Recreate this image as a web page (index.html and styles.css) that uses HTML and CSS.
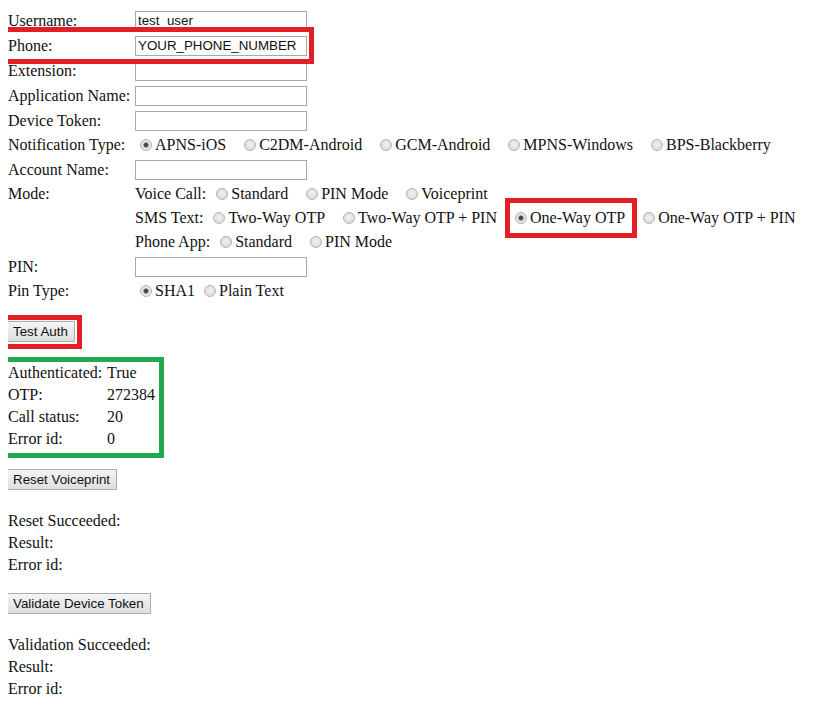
FILE: index.html
```html
<!DOCTYPE html>
<html lang="en">
<head>
    <meta charset="UTF-8">
    <title>Auth Test</title>
    <link rel="stylesheet" href="styles.css">
</head>
<body>
    <form class="auth-form">
        <div class="fields">
            <label for="username">Username:</label>
            <div class="cell"><input type="text" id="username" value="test_user"></div>

            <label for="phone">Phone:</label>
            <div class="cell"><input type="text" id="phone" value="YOUR_PHONE_NUMBER"></div>

            <label for="extension">Extension:</label>
            <div class="cell"><input type="text" id="extension"></div>

            <label for="appName">Application Name:</label>
            <div class="cell"><input type="text" id="appName"></div>

            <label for="deviceToken">Device Token:</label>
            <div class="cell"><input type="text" id="deviceToken"></div>

            <span class="radio-row">Notification Type:</span>
            <div class="choices radio-row">
                <label class="choice"><input type="radio" name="notify" checked>APNS-iOS</label>
                <label class="choice"><input type="radio" name="notify">C2DM-Android</label>
                <label class="choice"><input type="radio" name="notify">GCM-Android</label>
                <label class="choice"><input type="radio" name="notify">MPNS-Windows</label>
                <label class="choice"><input type="radio" name="notify">BPS-Blackberry</label>
            </div>

            <label for="accountName">Account Name:</label>
            <div class="cell"><input type="text" id="accountName"></div>

            <span class="mode-label">Mode:</span>
            <div class="modes">
                <div class="choices radio-row">
                    <span class="sub">Voice Call:</span>
                    <label class="choice"><input type="radio" name="mode">Standard</label>
                    <label class="choice"><input type="radio" name="mode">PIN Mode</label>
                    <label class="choice"><input type="radio" name="mode">Voiceprint</label>
                </div>
                <div class="choices radio-row">
                    <span class="sub">SMS Text:</span>
                    <label class="choice"><input type="radio" name="mode">Two-Way OTP</label>
                    <label class="choice"><input type="radio" name="mode">Two-Way OTP + PIN</label>
                    <label class="choice"><input type="radio" name="mode" checked>One-Way OTP</label>
                    <label class="choice"><input type="radio" name="mode">One-Way OTP + PIN</label>
                </div>
                <div class="choices radio-row">
                    <span class="sub">Phone App:</span>
                    <label class="choice"><input type="radio" name="mode">Standard</label>
                    <label class="choice"><input type="radio" name="mode">PIN Mode</label>
                </div>
            </div>

            <label for="pin">PIN:</label>
            <div class="cell"><input type="text" id="pin"></div>

            <span class="radio-row">Pin Type:</span>
            <div class="choices tight radio-row">
                <label class="choice"><input type="radio" name="pinType" checked>SHA1</label>
                <label class="choice"><input type="radio" name="pinType">Plain Text</label>
            </div>
        </div>

        <div class="section first">
            <button type="button">Test Auth</button>
            <div class="results">
                <span>Authenticated:</span><span>True</span>
                <span>OTP:</span><span>272384</span>
                <span>Call status:</span><span>20</span>
                <span>Error id:</span><span>0</span>
            </div>
        </div>

        <div class="section">
            <button type="button">Reset Voiceprint</button>
            <div class="results">
                <span>Reset Succeeded:</span><span></span>
                <span>Result:</span><span></span>
                <span>Error id:</span><span></span>
            </div>
        </div>

        <div class="section last">
            <button type="button">Validate Device Token</button>
            <div class="results">
                <span>Validation Succeeded:</span><span></span>
                <span>Result:</span><span></span>
                <span>Error id:</span><span></span>
            </div>
        </div>
    </form>

    <!-- marker boxes drawn over the form -->
    <div class="mark red phone-mark"></div>
    <div class="mark red otp-mark"></div>
    <div class="mark red auth-mark"></div>
    <div class="mark green result-mark"></div>
</body>
</html>
```

FILE: styles.css
```css
body {
    font-family: "Liberation Serif", "Times New Roman", serif;
    font-size: 16px;
    color: #111;
    margin: 8px;
    background: #fff;
    position: relative;
}
.fields {
    display: grid;
    grid-template-columns: 127px 1fr;
    grid-template-rows: 25px 25px 25px 25px 25px 24px 25px 24px 24px 24px 25px 24px;
    align-items: center;
}
.fields > label,
.fields > span {
    white-space: nowrap;
}
.radio-row {
    height: 24px;
}
.fields > span.radio-row {
    line-height: 24px;
}
.cell {
    display: flex;
    align-items: center;
}
input[type="text"] {
    width: 172px;
    height: 20px;
    box-sizing: border-box;
    border: 1px solid #a9a9a9;
    padding: 1px 2px;
    margin: 0;
    font-family: "Liberation Sans", Arial, sans-serif;
    font-size: 13.33px;
    color: #111;
}
.choices {
    display: flex;
    align-items: center;
    gap: 13px;
    white-space: nowrap;
}
.choices.tight {
    gap: 4px;
}
.choice {
    display: flex;
    align-items: center;
}
.sub {
    margin-right: -8px;
}
input[type="radio"] {
    appearance: none;
    -webkit-appearance: none;
    width: 12px;
    height: 12px;
    margin: 0 3px 0 5px;
    border: 1px solid #b4b4b4;
    border-radius: 50%;
    background: radial-gradient(circle at 50% 45%, #f2f2f2 0, #dcdcdc 70%, #cfcfcf 100%);
    box-sizing: border-box;
}
input[type="radio"]:checked {
    background: radial-gradient(circle, #3c3c3c 0, #555 2px, #e2e2e2 3px, #e6e6e6 100%);
}
.mode-label {
    grid-row: span 3;
    align-self: start;
    line-height: 24px;
}
.modes {
    grid-row: span 3;
    align-self: start;
}
.section {
    margin-top: 19px;
}
.section.first {
    margin-top: 18px;
}
.section.last {
    margin-top: 17px;
}
button {
    display: block;
    height: 21px;
    padding: 0 6px;
    margin: 0 0 20px -2px;
    border: 1px solid #acacac;
    border-radius: 0;
    background: linear-gradient(#f4f4f4, #dfdfdf);
    font-family: "Liberation Sans", Arial, sans-serif;
    font-size: 13.33px;
    color: #111;
}
.results {
    display: grid;
    grid-template-columns: 99px auto;
    grid-auto-rows: 22px;
    align-items: center;
    white-space: nowrap;
}
.mark {
    position: absolute;
    box-sizing: border-box;
    border: 5px solid;
}
.red {
    border-color: #e21f27;
}
.green {
    border-color: #22a94b;
}
.phone-mark {
    left: -6px;
    top: 19px;
    width: 312px;
    height: 37px;
}
.otp-mark {
    left: 497px;
    top: 190px;
    width: 132px;
    height: 40px;
}
.auth-mark {
    left: -8px;
    top: 307px;
    width: 82px;
    height: 34px;
}
.result-mark {
    left: -8px;
    top: 349px;
    width: 164px;
    height: 101px;
}
```
